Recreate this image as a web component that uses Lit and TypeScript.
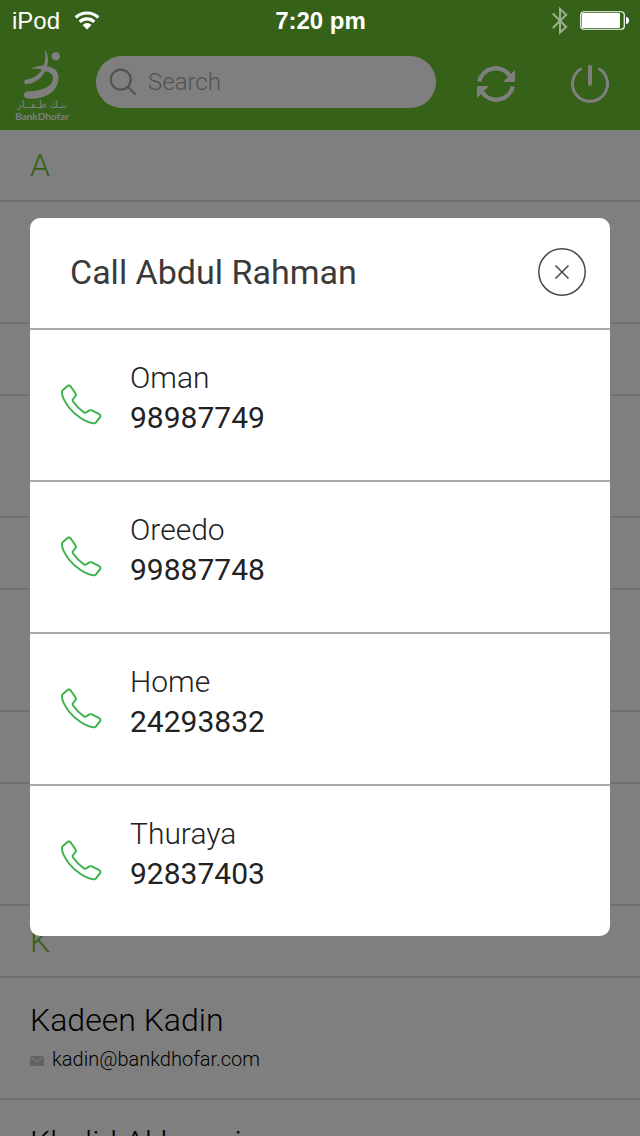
import { LitElement, html, css, nothing } from "lit";
import { customElement, state } from "lit/decorators.js";

interface Contact {
  name?: string;
  email?: string;
}
interface Section {
  letter?: string;
  contacts: Contact[];
}
interface Phone {
  label: string;
  number: string;
}

@customElement("app-root")
export class AppRoot extends LitElement {
  static styles = css`
    :host {
      display: block;
      font-family: Roboto, "Liberation Sans", sans-serif;
      color: #000;
      background: #fff;
    }
    * {
      box-sizing: border-box;
    }
    .screen {
      position: relative;
      height: 100vh;
      overflow: hidden;
    }
    .top {
      background: #6cc230;
      padding-top: 40px;
    }
    .toolbar {
      display: flex;
      align-items: center;
      height: 90px;
      padding: 0 30px 2px 16px;
    }
    .logo {
      display: flex;
      flex: none;
      flex-direction: column;
      align-items: center;
      width: 52px;
      margin-right: 28px;
      color: #fff;
      text-decoration: none;
      white-space: nowrap;
    }
    .logo svg {
      width: 40px;
      height: 52px;
    }
    .logo-ar {
      font: 10px/12px "DejaVu Sans", sans-serif;
    }
    .logo-en {
      font: 700 10px/10px Lato, sans-serif;
    }
    .search {
      display: flex;
      align-items: center;
      flex: 0 1 340px;
      min-width: 0;
      height: 52px;
      margin-bottom: 4px;
      padding: 0 12px;
      gap: 10px;
      border-radius: 26px;
      background: #fff;
    }
    .search svg {
      flex: none;
      width: 30px;
      height: 30px;
    }
    .search input {
      flex: 1;
      min-width: 0;
      padding: 0;
      border: 0;
      outline: 0;
      background: none;
      font: 300 24px/32px Roboto, sans-serif;
      color: #000;
    }
    .search input::placeholder {
      color: #a6a6a6;
      opacity: 1;
    }
    .actions {
      display: flex;
      flex: none;
      gap: 54px;
      margin-left: auto;
    }
    .tool {
      display: block;
      width: 40px;
      height: 40px;
      padding: 0;
      border: 0;
      background: none;
    }
    svg {
      display: block;
    }
    .letter {
      margin: 0;
      height: 72px;
      padding-left: 30px;
      border-bottom: 2px solid #e2e2e2;
      font-size: 32px;
      font-weight: 300;
      line-height: 70px;
      color: #6cc230;
    }
    .contact {
      height: 122px;
      padding: 20px 30px;
      border-bottom: 2px solid #e2e2e2;
      font-weight: 300;
    }
    .name {
      font-size: 32px;
      line-height: 44px;
    }
    .mail {
      display: flex;
      align-items: center;
      gap: 8px;
      font-size: 20px;
      line-height: 34px;
      color: inherit;
      text-decoration: none;
    }
    .mail svg {
      width: 14px;
      height: 10px;
      margin-top: 4px;
    }
    .scrim {
      position: absolute;
      inset: 0;
      display: flex;
      align-items: center;
      padding: 18px 30px 0;
      background: rgba(0, 0, 0, 0.5);
    }
    .dialog {
      flex: 1;
      border-radius: 10px;
      background: #fff;
    }
    .head {
      display: flex;
      align-items: center;
      justify-content: space-between;
      height: 110px;
      padding: 0 24px 2px 40px;
    }
    .head h1 {
      margin: 0;
      font-size: 34px;
      line-height: 44px;
      font-weight: 400;
      color: #3a3a3a;
    }
    .close {
      display: block;
      width: 48px;
      height: 48px;
      padding: 0;
      border: 0;
      background: none;
    }
    .phone {
      display: flex;
      align-items: center;
      gap: 28px;
      height: 152px;
      padding-left: 30px;
      border-top: 2px solid #a9a9a9;
      color: #222;
      text-decoration: none;
      font-size: 30px;
      line-height: 40px;
    }
    .phone svg {
      width: 42px;
      height: 42px;
    }
    .phone-text {
      display: flex;
      flex-direction: column;
      padding-bottom: 14px;
    }
    .label {
      font-weight: 300;
    }
    .number {
      font-weight: 400;
    }
    .status {
      position: absolute;
      inset: 0 0 auto;
      display: grid;
      grid-template-columns: 1fr auto 1fr;
      align-items: center;
      height: 42px;
      padding: 0 11px 0 12px;
      color: #fff;
      font: 24px/42px "Liberation Sans", sans-serif;
    }
    .status-side {
      display: flex;
      align-items: center;
      gap: 14px;
    }
    .end {
      justify-content: flex-end;
      gap: 12px;
    }
    .clock {
      font-weight: 700;
    }
  `;

  @state() private open = true;

  private sections: Section[] = [
    { letter: "A", contacts: [{}] },
    { contacts: [{}] },
    { contacts: [{}] },
    { contacts: [{}] },
    {
      letter: "K",
      contacts: [
        { name: "Kadeen Kadin", email: "kadin@bankdhofar.com" },
        { name: "Khalid Akharmi" },
      ],
    },
  ];

  private phones: Phone[] = [
    { label: "Oman", number: "98987749" },
    { label: "Oreedo", number: "99887748" },
    { label: "Home", number: "24293832" },
    { label: "Thuraya", number: "92837403" },
  ];

  private renderStatus() {
    return html`
      <div class="status">
        <div class="status-side">
          <span>iPod</span>
          <svg width="26" height="20" viewBox="0 0 26 20" fill="none" stroke="#fff" stroke-width="3.200">
            <path d="M1.700 6.500a16.500 16.500 0 0 1 22.600 0" />
            <path d="M5.700 10.900a10.500 10.500 0 0 1 14.600 0" />
            <path d="M13 18.500l-4.500-4.500a6.300 6.300 0 0 1 9 0z" fill="#fff" stroke="none" />
          </svg>
        </div>
        <span class="clock">7:20 pm</span>
        <div class="status-side end">
          <svg width="16" height="28" viewBox="0 0 16 28" fill="none" stroke="#fff" stroke-opacity=".5" stroke-width="2">
            <path d="M.8 6.500l13.400 13.500L8 25.500V2l6.200 5.700L.8 21" />
          </svg>
          <svg width="49" height="20" viewBox="0 0 49 20">
            <rect x=".75" y=".75" width="43.500" height="17.500" rx="3" fill="none" stroke="#fff" stroke-width="1.200" />
            <rect x="2" y="2" width="38" height="15" rx="1" fill="#fff" />
            <path d="M46 6c2 0 3 1.500 3 3.500S48 13 46 13z" fill="#fff" />
          </svg>
        </div>
      </div>
    `;
  }

  private renderToolbar() {
    return html`
      <header class="top">
        <div class="toolbar">
          <a class="logo" href="#">
            <svg viewBox="0 0 40 52" fill="#fff" aria-hidden="true">
              <circle cx="33.700" cy="9.300" r="4.100" />
              <path d="M23 2C26.300 8 26.700 14 25 19.500C31 20 36.500 23 36.500 31C36.500 42 27 51.500 9 51.700C4 51.500 1.500 50.500 2 48C2.200 46 3 44.800 4.500 44.400C17 44.500 30 41 31 32C31.300 27.500 28 24.300 23 24.500C19.500 31 13 36.500 4 37.300C2 36.800 1.500 34.500 3.500 32.500C10.500 32 16.500 28.500 20 22.800C16 21.300 12 21.300 8 22.200C12 19.800 17 18.700 21.700 18.600C23.600 13 23.800 7 23 2z" />
            </svg>
            <span class="logo-ar" dir="rtl" lang="ar">بنـك ظـفــار</span>
            <span class="logo-en">BankDhofar</span>
          </a>
          <label class="search">
            <svg viewBox="0 0 30 30" fill="none" stroke="#a6a6a6" stroke-width="2.200" stroke-linecap="round" aria-hidden="true">
              <circle cx="12.800" cy="12.600" r="10" />
              <path d="M20 20l7 7" />
            </svg>
            <input type="text" placeholder="Search" aria-label="Search" />
          </label>
          <div class="actions">
            <button class="tool" aria-label="Refresh">
              <svg viewBox="0 0 40 40" fill="none" stroke="#fff" stroke-width="4.400" aria-hidden="true">
                <path d="M3.200 17.500A17 17 0 0 1 34 12" />
                <path d="M36.800 22.500A17 17 0 0 1 6 28" />
                <path d="M39 6v12H27z" fill="#fff" stroke="none" />
                <path d="M1 34V22h12z" fill="#fff" stroke="none" />
              </svg>
            </button>
            <button class="tool" aria-label="Log out">
              <svg viewBox="0 0 40 40" fill="none" stroke="#fff" aria-hidden="true">
                <path d="M11.500 4.500A17.500 17.500 0 1 0 28.500 4.500" stroke-width="3" />
                <path d="M20 3v17" stroke-width="4" stroke-linecap="round" />
              </svg>
            </button>
          </div>
        </div>
      </header>
    `;
  }

  private renderContact(c: Contact) {
    return html`
      <div class="contact">
        <div class="name">${c.name ?? nothing}</div>
        ${c.email
          ? html`<a class="mail" href="mailto:${c.email}">
              <svg viewBox="0 0 14 10" aria-hidden="true">
                <rect width="14" height="10" fill="#c6c7ca" />
                <path d="M0 .5l7 5 7-5" fill="none" stroke="#fff" stroke-width="1" />
              </svg>
              <span>${c.email}</span>
            </a>`
          : nothing}
      </div>
    `;
  }

  private renderDialog() {
    return html`
      <div class="scrim">
        <section class="dialog" role="dialog" aria-modal="true" aria-labelledby="title">
          <div class="head">
            <h1 id="title">Call Abdul Rahman</h1>
            <button class="close" aria-label="Close" @click=${() => (this.open = false)}>
              <svg viewBox="0 0 48 48" fill="none" stroke="#484848" stroke-width="1.500" aria-hidden="true">
                <circle cx="24" cy="24" r="23.200" />
                <path d="M17.500 17.500l13 13M30.500 17.500l-13 13" />
              </svg>
            </button>
          </div>
          ${this.phones.map(
            (p) => html`
              <a class="phone" href="tel:${p.number}">
                <svg viewBox="0 0 42 42" fill="none" stroke="#37b34a" stroke-width="1.900" stroke-linejoin="round" aria-hidden="true">
                  <path d="M2.500 6.500L7 2.200Q9 .8 10.700 2.500L15.600 9.600Q16.300 10.800 15.500 12L12.900 15.300Q12.300 16.200 13 17.500Q17.500 24 24.300 28.600Q25.300 29 26.200 28.500L29.300 26.400Q30.600 25.800 32 26.400L39.300 30.200Q41.300 31.500 40 33.200L36 38.300Q35 39.600 33 39.300C25 38 15 31 9 23.500C4.500 17.500 2 12.500 1.900 8.500Q1.900 7.300 2.500 6.500z" />
                </svg>
                <span class="phone-text">
                  <span class="label">${p.label}</span>
                  <span class="number">${p.number}</span>
                </span>
              </a>
            `
          )}
        </section>
      </div>
    `;
  }

  render() {
    return html`
      <div class="screen">
        ${this.renderToolbar()}
        <main>
          ${this.sections.map(
            (s) => html`
              <h2 class="letter">${s.letter ?? nothing}</h2>
              ${s.contacts.map((c) => this.renderContact(c))}
            `
          )}
        </main>
        ${this.open ? this.renderDialog() : nothing} ${this.renderStatus()}
      </div>
    `;
  }
}
